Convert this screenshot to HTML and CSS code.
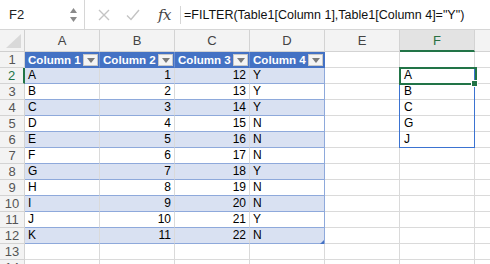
FILE: index.html
```html
<!DOCTYPE html>
<html>
<head>
<meta charset="utf-8">
<link rel="stylesheet" href="styles.css">
</head>
<body>
<div class="app">
  <div class="fbar">
    <div class="namebox">
      <span class="nb-text">F2</span>
      <svg class="nb-arrows" width="9" height="16" viewBox="0 0 9 16"><path d="M4.5 1 L8 6 L1 6 Z" fill="#8a8a8a"/><path d="M4.5 15 L8 10 L1 10 Z" fill="#8a8a8a"/></svg>
    </div>
    <div class="fb-tools">
      <svg class="ic-x" width="12" height="12" viewBox="0 0 12 12"><path d="M1 1 L11 11 M11 1 L1 11" stroke="#c4c4c4" stroke-width="1.4" fill="none"/></svg>
      <svg class="ic-ok" width="14" height="12" viewBox="0 0 14 12"><path d="M1 6.5 L5 10.5 L13 1" stroke="#c4c4c4" stroke-width="1.4" fill="none"/></svg>
      <span class="fx">fx</span>
    </div>
    <div class="formula">=FILTER(Table1[Column 1],Table1[Column 4]="Y")</div>
  </div>
  <div class="sheet">
    <div class="grid">
      <div class="corner"><svg width="24" height="21" viewBox="0 0 24 21"><path d="M6 18 L21 18 L21 4 Z" fill="#d9d9d9"/></svg></div>
      <div class="ch">A</div><div class="ch">B</div><div class="ch">C</div><div class="ch">D</div><div class="ch">E</div><div class="ch ch-sel">F</div><div class="ch ch-last"></div>

      <div class="rh">1</div>
      <div class="th"><span>Column 1</span><i class="dd"></i></div>
      <div class="th"><span>Column 2</span><i class="dd"></i></div>
      <div class="th"><span>Column 3</span><i class="dd"></i></div>
      <div class="th th-last"><span>Column 4</span><i class="dd"></i></div>
      <div class="c"></div><div class="c"></div><div class="c last"></div>

      <div class="rh rh-sel">2</div>
      <div class="t band">A</div><div class="t band num">1</div><div class="t band num">12</div><div class="t band tl">Y</div>
      <div class="c"></div><div class="c">A</div><div class="c last"></div>

      <div class="rh">3</div>
      <div class="t">B</div><div class="t num">2</div><div class="t num">13</div><div class="t tl">Y</div>
      <div class="c"></div><div class="c">B</div><div class="c last"></div>

      <div class="rh">4</div>
      <div class="t band">C</div><div class="t band num">3</div><div class="t band num">14</div><div class="t band tl">Y</div>
      <div class="c"></div><div class="c">C</div><div class="c last"></div>

      <div class="rh">5</div>
      <div class="t">D</div><div class="t num">4</div><div class="t num">15</div><div class="t tl">N</div>
      <div class="c"></div><div class="c">G</div><div class="c last"></div>

      <div class="rh">6</div>
      <div class="t band">E</div><div class="t band num">5</div><div class="t band num">16</div><div class="t band tl">N</div>
      <div class="c"></div><div class="c">J</div><div class="c last"></div>

      <div class="rh">7</div>
      <div class="t">F</div><div class="t num">6</div><div class="t num">17</div><div class="t tl">N</div>
      <div class="c"></div><div class="c"></div><div class="c last"></div>

      <div class="rh">8</div>
      <div class="t band">G</div><div class="t band num">7</div><div class="t band num">18</div><div class="t band tl">Y</div>
      <div class="c"></div><div class="c"></div><div class="c last"></div>

      <div class="rh">9</div>
      <div class="t">H</div><div class="t num">8</div><div class="t num">19</div><div class="t tl">N</div>
      <div class="c"></div><div class="c"></div><div class="c last"></div>

      <div class="rh">10</div>
      <div class="t band">I</div><div class="t band num">9</div><div class="t band num">20</div><div class="t band tl">N</div>
      <div class="c"></div><div class="c"></div><div class="c last"></div>

      <div class="rh">11</div>
      <div class="t">J</div><div class="t num">10</div><div class="t num">21</div><div class="t tl">Y</div>
      <div class="c"></div><div class="c"></div><div class="c last"></div>

      <div class="rh">12</div>
      <div class="t band">K</div><div class="t band num">11</div><div class="t band num">22</div><div class="t band tl">N</div>
      <div class="c"></div><div class="c"></div><div class="c last"></div>

      <div class="rh">13</div>
      <div class="c"></div><div class="c"></div><div class="c"></div><div class="c"></div><div class="c"></div><div class="c"></div><div class="c last"></div>

      <div class="rh">14</div>
      <div class="c"></div><div class="c"></div><div class="c"></div><div class="c"></div><div class="c"></div><div class="c"></div><div class="c last"></div>
    </div>
    <div class="resize"></div>
    <div class="spill"></div>
    <div class="sel"></div>
    <div class="handle"></div>
  </div>
</div>
</body>
</html>
```
FILE: styles.css
```css
* { box-sizing: border-box; }
html, body { margin: 0; padding: 0; background: #fff; }
body { font-family: "Liberation Sans", Arial, sans-serif; color: #000; }
.app { width: 490px; height: 264px; overflow: hidden; }

.fbar {
  height: 30px;
  border-bottom: 1px solid #d6d6d6;
  display: flex;
  align-items: center;
  background: #fff;
}
.namebox {
  width: 85px;
  height: 29px;
  border-right: 1px solid #d6d6d6;
  display: flex;
  align-items: center;
  justify-content: space-between;
  padding: 0 6px 0 9px;
}
.nb-text { font-size: 13px; color: #222; }
.nb-arrows { display: block; }
.fb-tools {
  width: 96px;
  height: 18px;
  border-right: 1px solid #d6d6d6;
  display: flex;
  align-items: center;
  padding-left: 13px;
}
.ic-x { margin-right: 16px; }
.ic-ok { margin-right: 18px; }
.fx {
  font-family: "DejaVu Serif", "Liberation Serif", serif;
  font-style: italic;
  font-size: 15px;
  color: #444;
  letter-spacing: -0.5px;
}
.formula { font-size: 12.5px; padding-left: 3px; color: #111; white-space: nowrap; }

.sheet { position: relative; }
.grid {
  display: grid;
  grid-template-columns: 25px repeat(6, 75px) 1fr;
  grid-template-rows: 22px repeat(13, 16px);
  font-size: 12px;
}
.grid > div {
  border-right: 1px solid #dadada;
  border-bottom: 1px solid #dadada;
  white-space: nowrap;
  overflow: hidden;
  line-height: 15px;
}
.corner { background: #f3f3f3; border-color: #cfcfcf !important; }
.corner svg { display: block; }
.ch {
  background: #f3f3f3;
  text-align: center;
  font-size: 13px;
  color: #444;
  line-height: 22px !important;
  border-color: #d3d3d3 !important;
}
.ch-sel { background: #e3e3e3; color: #2a7042; border-bottom: 2px solid #227447 !important; }
.ch-last { border-right: none !important; }
.rh {
  background: #f3f3f3;
  text-align: center;
  font-size: 13px;
  color: #555;
  border-color: #d3d3d3 !important;
}
.rh-sel { color: #227447; border-right: 2px solid #227447 !important; }
.c { padding-left: 4px; }
.last { border-right: none !important; }

.th {
  background: #4472c4;
  color: #fff;
  font-weight: bold;
  font-size: 11.6px;
  display: flex;
  align-items: center;
  justify-content: space-between;
  padding-left: 3px;
  padding-right: 1px;
  border-right: 1px solid #6d90d0 !important;
  border-bottom: 1px solid #4472c4 !important;
}
.th-last { border-right: 1px solid #4472c4 !important; }
.dd {
  display: block;
  flex: none;
  width: 15px;
  height: 12px;
  background: #f4f4f4;
  border: 1px solid #c8c8c8;
  position: relative;
}
.dd::after {
  content: "";
  position: absolute;
  left: 3px;
  top: 3px;
  border-left: 4px solid transparent;
  border-right: 4px solid transparent;
  border-top: 5px solid #7a7a7a;
}
.t {
  padding: 0 3px;
  border-bottom: 1px solid #8ea9db !important;
}
.band { background: #d9e1f2; }
.num { text-align: right; }
.tl { border-right: 1px solid #8ea9db !important; }

.resize {
  position: absolute;
  left: 320px;
  top: 210px;
  width: 0; height: 0;
  border-left: 4px solid transparent;
  border-bottom: 4px solid #4472c4;
}
.spill {
  position: absolute;
  left: 399px;
  top: 37px;
  width: 76px;
  height: 81px;
  border: 1px solid #3b73d1;
}
.sel {
  position: absolute;
  left: 399px;
  top: 37px;
  width: 78px;
  height: 18px;
  border: 2px solid #227447;
}
.handle {
  position: absolute;
  left: 471px;
  top: 50px;
  width: 7px;
  height: 7px;
  background: #227447;
  border: 1px solid #fff;
}
```
